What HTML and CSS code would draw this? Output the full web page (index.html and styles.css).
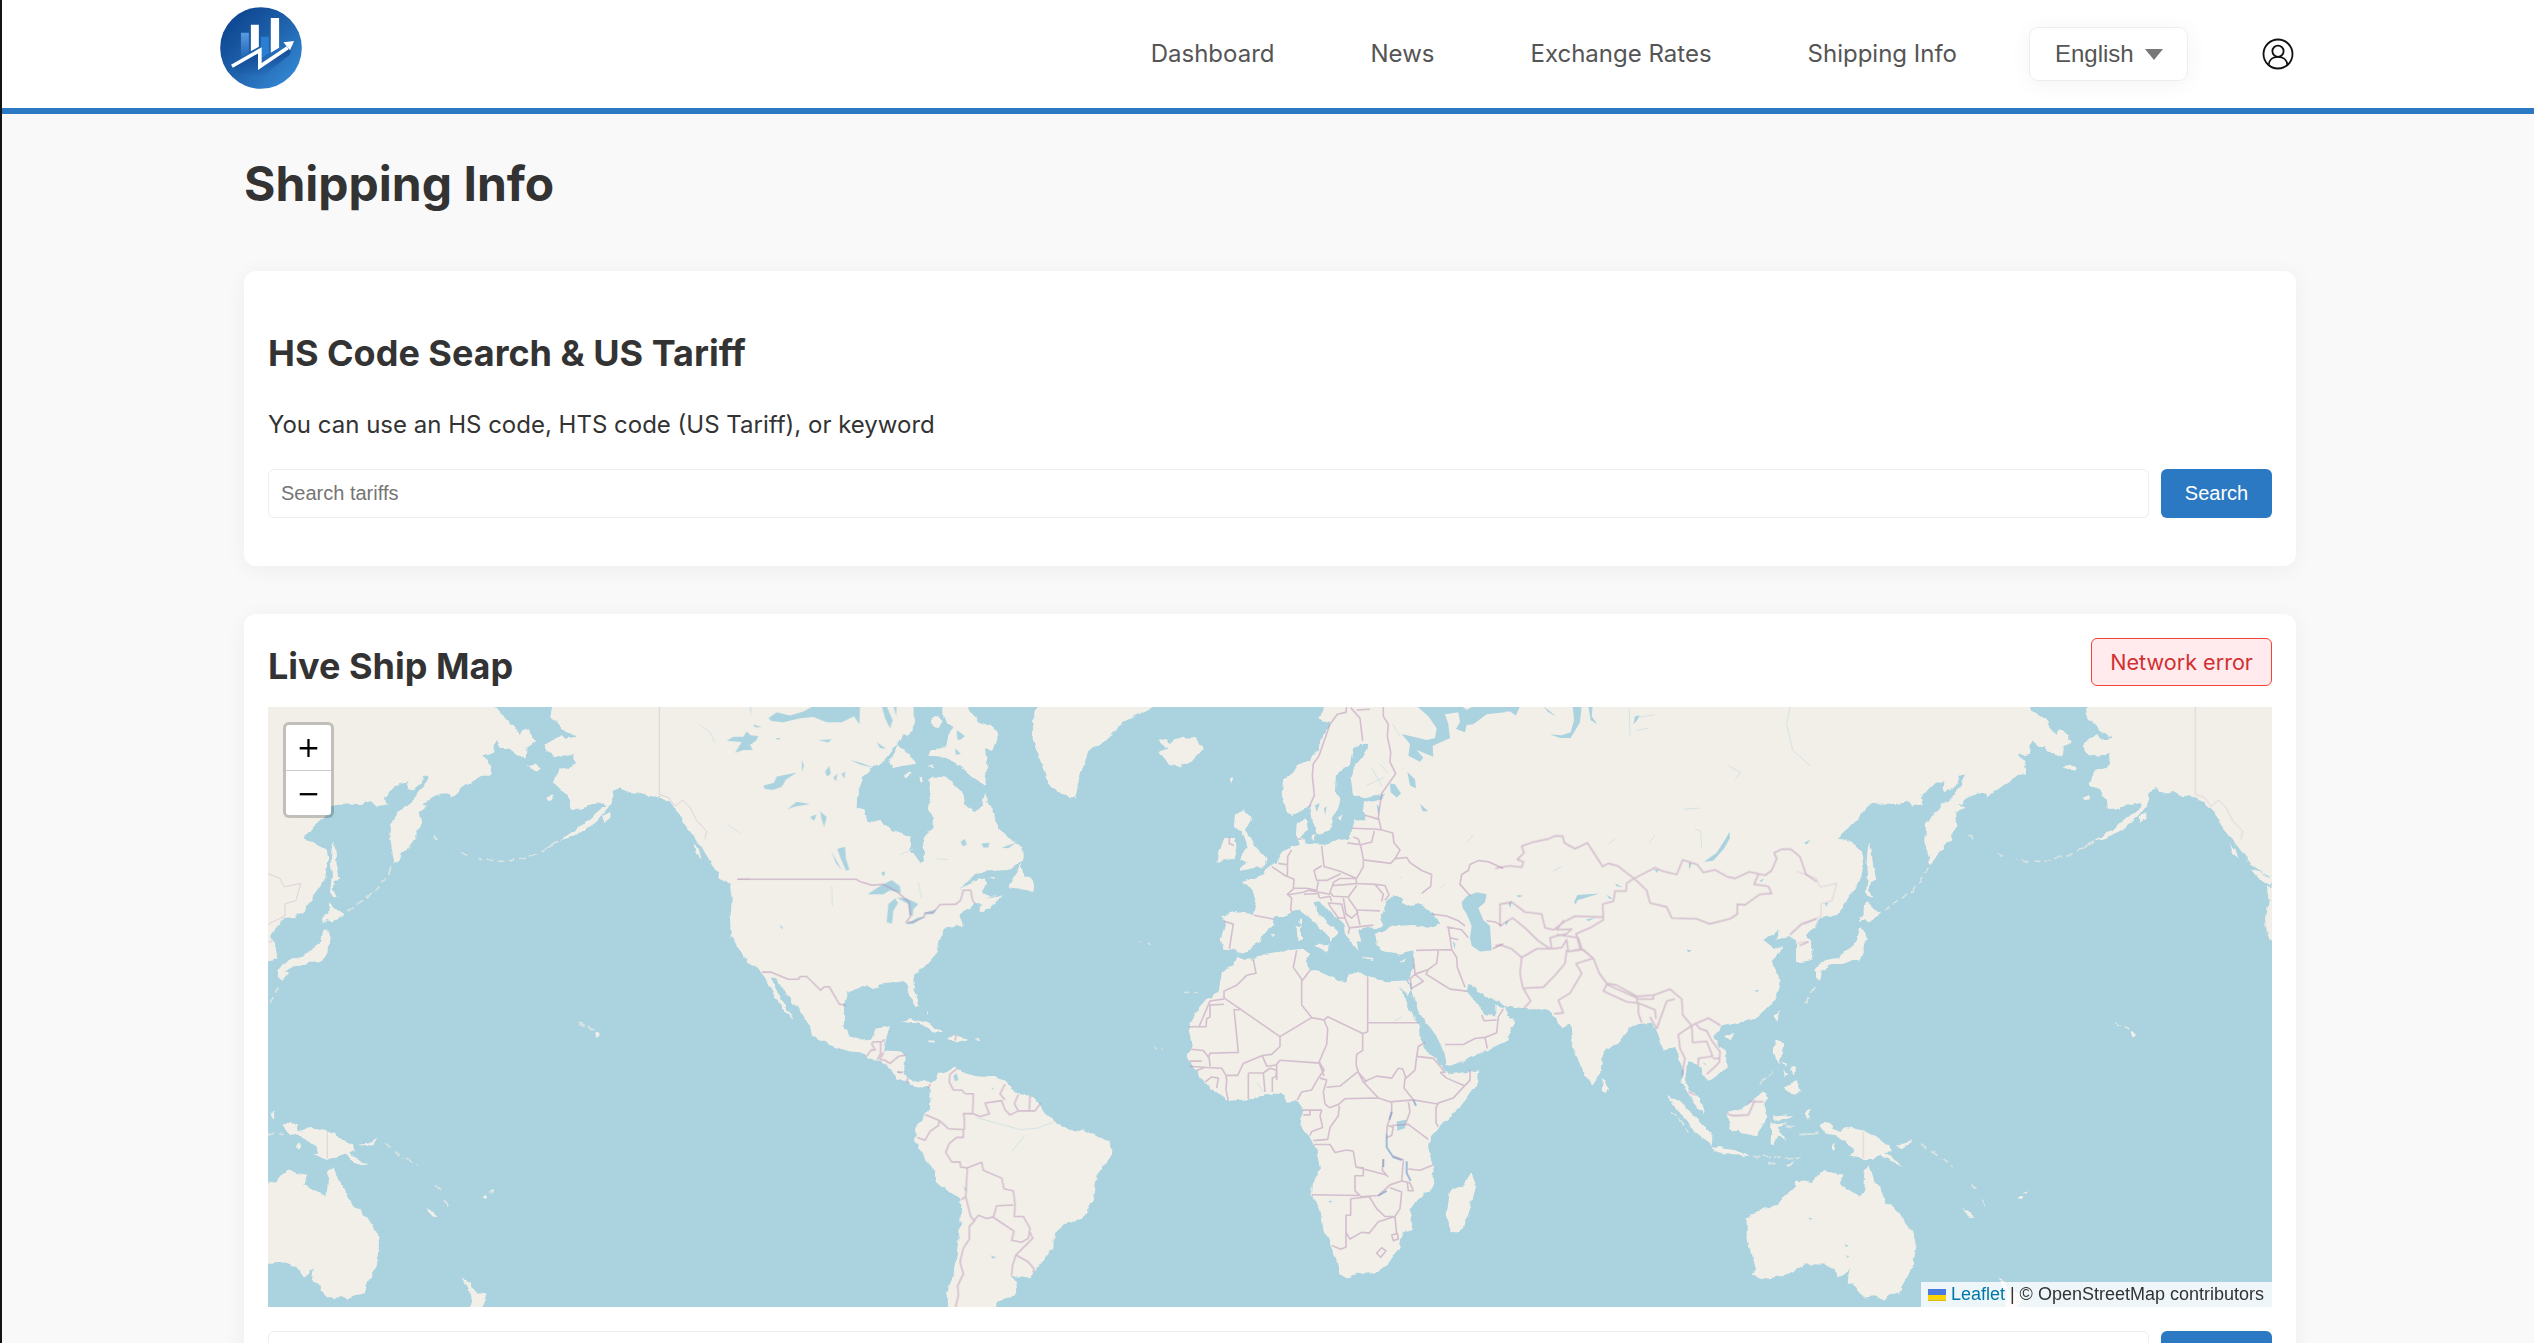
FILE: index.html
```html
<!DOCTYPE html>
<html lang="en">
<head>
<meta charset="utf-8">
<title>Shipping Info</title>
<link rel="stylesheet" href="styles.css">
</head>
<body>
<header class="site-header">
  <div class="header-inner">
    <svg class="logo" viewBox="15 22 247 246">
      <defs>
        <linearGradient id="lg" x1="0.1" y1="0.1" x2="0.9" y2="0.9"><stop offset="0" stop-color="#0c438f"/><stop offset="0.5" stop-color="#1f62ab"/><stop offset="1" stop-color="#3488d5"/></linearGradient>
        <linearGradient id="bar" x1="0" y1="0" x2="0" y2="1"><stop offset="0" stop-color="#5b9be0"/><stop offset="1" stop-color="#1e62b4"/></linearGradient>
        <linearGradient id="shade" x1="0" y1="0" x2="0" y2="1"><stop offset="0" stop-color="#0a3a85" stop-opacity=".75"/><stop offset="1" stop-color="#0a3a85" stop-opacity="0"/></linearGradient>
      </defs>
      <circle cx="138.500" cy="145" r="123" fill="url(#lg)"/>
      <path d="M52 200L130 155L134 205L232 140L225 165L140 232L70 222Z" fill="url(#shade)"/>
      <path d="M78 99h24v64l-24 14Z" fill="url(#bar)"/>
      <path d="M138 111h24v50l-22 14Z" fill="#2a7fd2"/>
      <path d="M108 75h24v66l-24 14ZM168 55h25v89l-25 15Z" fill="#fff"/>
      <path d="M51 200L135 152V201L219 144" fill="none" stroke="#fff" stroke-width="11"/>
      <path d="M206 128L238 124L226 152Z" fill="#fff"/>
    </svg>
    <nav class="nav">
      <a>Dashboard</a><a>News</a><a>Exchange Rates</a><a>Shipping Info</a>
    </nav>
    <button class="lang"><span>English</span><i class="caret"></i></button>
    <svg class="user" viewBox="0 0 32 32"><g fill="none" stroke="#111" stroke-width="1.800"><circle cx="16" cy="16" r="14.500"/><circle cx="16" cy="13.200" r="5.600"/><path d="M6.600 27c.4-5.200 4.400-8.200 9.400-8.200s9 3 9.400 8.200"/></g></svg>
  </div>
</header>
<main class="page">
  <h1>Shipping Info</h1>
  <section class="card card-search">
    <h2>HS Code Search &amp; US Tariff</h2>
    <p>You can use an HS code, HTS code (US Tariff), or keyword</p>
    <div class="search-row"><input class="field" type="text" placeholder="Search tariffs"><button class="btn">Search</button></div>
  </section>
  <section class="card card-map">
    <div class="map-head"><h2>Live Ship Map</h2><div class="alert">Network error</div></div>
    <div class="map">
      <svg class="world" viewBox="0 0 2004 600">
        <defs>
          <filter id="coast" x="0" y="0" width="2004" height="600" filterUnits="userSpaceOnUse"><feTurbulence type="fractalNoise" baseFrequency="0.11" numOctaves="2" seed="4"/><feDisplacementMap in="SourceGraphic" scale="6" xChannelSelector="R" yChannelSelector="G"/></filter>
          <g id="pacific" transform="translate(-8 -66.500) scale(.33333 .43367)">
            <path d="M0,130L680,130 712,163 745,182 763,200 778,215 790,207 812,215 828,233 800,248 797,270 770,262 745,248 725,248 710,230 704,240 703,258 665,265 683,275 692,305 688,312 665,312 635,325 605,342 575,362 566,353 545,353 520,360 505,368 487,378 503,382 480,395 484,432 470,438 468,460 445,470 440,482 425,490 420,503 403,517 397,500 388,460 390,425 410,402 440,378 470,360 495,330 507,312 490,312 485,330 468,340 450,347 443,343 445,325 420,328 400,340 375,362 380,378 350,383 335,373 300,377 265,376 230,377 215,382 200,400 175,420 145,440 128,457 150,460 170,470 200,482 205,500 198,520 192,555 160,590 130,625 105,637 75,640 65,650 45,660 30,680 45,700 52,730 40,738 0,742Z"/>
            <path d="M215,480L220,466 226,480 230,515 240,550 222,552 218,575 232,590 218,590 210,580 216,540 212,510ZM208,603L225,615 255,630 235,640 215,650 200,640 188,650 186,640 205,628ZM192,660L205,665 212,690 200,705 200,725 190,738 160,740 135,748 105,748 90,755 75,762 80,772 68,785 60,775 55,760 70,745 100,735 130,732 145,715 165,710 185,690 188,672Z"/>
            <path d="M885,130L870,178 895,190 910,208 950,222 915,226 905,218 880,228 853,242 870,258 880,265 910,268 942,262 945,285 925,295 898,298 885,315 878,330 900,340 915,350 930,368 932,388 960,388 985,382 1030,375 1040,380 1020,392 995,408 960,430 930,445 895,462 930,455 970,440 1010,418 1030,400 1050,380 1060,366 1055,350 1080,340 1100,350 1130,350 1160,358 1200,362 1230,375 1255,395 1275,425 1300,450 1320,470 1340,490 1365,515 1390,530 1420,545 1432,570 1412,562 1418,600 1410,640 1412,672 1450,720V130Z"/>
            <path d="M1362,525L1395,533 1428,553 1420,562 1385,547ZM1300,468L1315,478 1325,502 1308,492ZM1026,405L1050,396 1052,408 1032,420ZM803,290L825,286 843,296 830,302 815,296ZM862,362L880,356 882,366 868,368Z"/>
            <path d="M90,1138L68,1118 95,1108 112,1120 108,1130 130,1132 155,1122 200,1130 240,1145 275,1165 285,1180 265,1182 300,1200 325,1212 290,1205 250,1183 230,1195 205,1196 180,1190 160,1188 175,1182 165,1165 130,1150 115,1140ZM298,1162L325,1160 352,1146 342,1160 320,1168ZM495,1308L512,1314 533,1330 518,1328ZM664,1284L675,1278 682,1284 672,1290ZM682,1273L698,1267 696,1272ZM1005,905L1012,903 1020,910 1010,916ZM110,1165L118,1158 120,1168 114,1174ZM30,1090L40,1082 40,1105 32,1100Z"/>
            <path d="M0,1245L50,1250 60,1235 85,1222 110,1228 145,1232 130,1252 165,1270 195,1282 205,1265 208,1225 218,1212 232,1245 250,1255 268,1295 300,1312 325,1340 352,1362 360,1400 350,1440 325,1480 312,1505 285,1510 265,1520 235,1512 205,1515 185,1500 175,1485 155,1480 160,1450 130,1468 110,1445 80,1435 50,1433 0,1442ZM606,1466L628,1482 645,1505 680,1508 670,1525 655,1560 620,1560 634,1520 626,1495Z"/>
            <g class="isle"><path d="M895,463L870,475 845,487"/><path stroke-dasharray="7 4" d="M830,494L780,502 740,510 700,508 660,505M622,496L602,488M532,458L518,450M395,525L375,550 345,580 310,598 255,628M375,1160L395,1173M405,1178L432,1194M440,1196L470,1212M528,1254L546,1270M555,1290L566,1306M955,882L1004,898M24,1137L68,1139M55,800L30,838"/></g>
          </g>
          <g id="pacific-lines" transform="translate(-8 -66.500) scale(.33333 .43367)">
            <path class="meridian" d="M1198,130V355M202,1132V1195"/>
            <path d="M1198,355L1225,362 1245,382 1268,368 1290,385 1310,415 1340,440 1335,458M1432,550H1470M0,532L24,538 60,548 72,568 122,560 108,600 75,607 75,635 35,650 24,655M0,698L24,695 38,695"/>
          </g>
        </defs>
        <g class="land" filter="url(#coast)">
          <use href="#pacific"/><use href="#pacific" x="1536"/>
          <g transform="translate(432 -6.500) scale(.33333 .39541)">
            <path d="M-10,0L640,0 642,70 622,95 605,85 580,120 570,135 555,152 520,165 490,195 472,235 470,270 490,275 500,305 540,308 580,330 630,345 632,380 660,412 675,405 668,350 700,325 702,295 680,272 692,240 685,200 700,192 740,195 770,218 790,235 795,265 825,282 845,265 855,235 880,280 895,320 930,350 968,375 968,405 930,428 870,432 830,435 800,460 780,482 820,455 855,450 858,462 850,480 870,500 912,490 905,500 870,522 850,535 835,530 850,515 825,515 780,540 785,567 740,575 720,600 712,640 680,670 640,695 642,730 658,770 648,778 630,745 622,722 605,710 575,715 540,718 535,728 490,722 445,740 432,780 432,820 450,850 480,860 515,858 530,830 570,823 560,850 552,885 600,887 617,900 612,940 625,958 655,965 670,960 690,970 700,965 720,942 740,938 768,928 785,938 830,948 870,950 905,955 950,995 1000,1000 1040,1045 1065,1068 1110,1085 1180,1095 1230,1118 1237,1145 1190,1200 1183,1255 1150,1310 1100,1320 1062,1345 1060,1380 1015,1430 985,1462 935,1455 950,1475 955,1490 930,1512 890,1520 885,1560 742,1560 740,1500 760,1450 770,1400 780,1330 785,1260 740,1240 708,1215 700,1190 665,1140 645,1112 650,1075 690,1030 692,985 680,975 655,982 620,965 590,955 565,920 540,912 505,908 490,890 450,888 400,875 335,845 330,820 295,780 250,730 232,705 212,703 240,750 280,805 262,795 240,770 215,735 185,685 140,662 120,630 95,600 92,560 95,500 90,468 60,450 40,420 15,385 0,362 -10,355Z"/>
            <path d="M730,0L800,0 830,50 870,65 898,85 880,128 855,120 862,165 855,214 820,195 780,165 740,145 685,142 690,125 735,118 740,95 757,70 730,40ZM590,108L605,120 652,160 615,165 580,170 568,155 585,130ZM695,45L712,38 728,52 715,70 698,66ZM608,190L625,180 635,186 618,198ZM655,195L666,192 668,208 658,208ZM680,164L700,162 698,172ZM1030,0L1000,30 998,100 1020,150 1040,200 1075,235 1125,248 1140,190 1165,130 1210,105 1265,60V0ZM965,412L970,445 995,450 1005,485 985,480 925,472ZM40,418L70,430 108,455 95,462 60,445Z"/>
            <path d="M600,815L630,803 680,815 730,836 700,837 660,817 625,812ZM745,856L762,842 805,856 770,864ZM682,860L705,860 703,865 688,864ZM823,858L842,858 840,863 825,863ZM860,445L888,447 885,451ZM680,780L688,790 684,796Z"/>
          </g>
          <g transform="translate(832 -6.500) scale(.33333 .39541)">
            <path d="M685,0L655,45 690,60 665,100 640,140 600,165 550,200 545,235 560,280 580,290 610,280 630,265 640,310 655,340 690,330 700,295 722,250 705,225 708,190 750,160 760,120 780,110 805,110 800,130 760,170 752,195 758,235 790,248 840,240 855,235 845,250 790,260 785,280 800,300 780,306 762,298 752,330 750,350 720,352 665,365 620,362 605,345 620,325 615,298 590,310 588,340 600,365 575,372 550,380 530,410 500,425 490,440 455,450 425,460 455,475 470,510 462,540 400,535 365,545 375,570 362,600 370,628 400,630 415,640 450,630 478,610 485,590 520,570 525,545 560,545 595,528 620,545 660,575 690,600 685,618 700,600 718,590 680,560 650,530 640,510 660,508 690,535 730,565 735,590 760,620 775,635 770,610 790,605 775,580 800,572 825,576 850,565 840,550 860,510 880,492 910,500 905,512 930,520 955,512 1000,540 1018,565 985,578 940,568 880,570 860,578 825,590 830,615 850,635 900,640 940,632 940,670 925,710 935,735 950,780 1000,840 1030,880 1040,920 1060,920 1150,890 1220,862 1220,775 1195,780 1185,800 1150,795 1135,770 1100,735 1105,720 1125,725 1155,750 1220,758V0Z"/>
            <path d="M408,285L430,275 455,298 435,330 465,365 485,385 503,400 495,420 455,425 415,432 440,410 418,400 440,370 425,335 405,320ZM375,345L405,345 410,370 400,400 352,408 360,375ZM175,100L200,95 205,110 240,95 290,92 308,125 280,150 240,167 200,155 175,130 205,122ZM590,575L606,570 606,600 592,604ZM595,556L604,546 602,570ZM642,619L685,616 676,635ZM785,650L818,654 815,659ZM898,658L918,652 912,662ZM514,594L525,592 522,598ZM635,340L647,338 645,354ZM716,295L725,290 718,305ZM388,196L400,195 394,210ZM-10,112L30,90 70,50 150,25 165,0H-10Z"/>
            <path d="M410,645L430,655 460,655 500,640 585,630 615,628 625,640 618,660 630,680 680,692 735,715 745,690 780,688 805,700 860,710 920,708 930,735 922,748 898,722 935,790 955,820 960,855 985,890 1035,930 1045,945 1138,935 1130,970 1080,1030 1020,1075 990,1110 985,1140 1000,1180 1003,1230 960,1260 928,1285 938,1310 935,1335 905,1350 900,1380 860,1430 830,1448 780,1450 738,1462 715,1450 715,1425 690,1375 670,1340 665,1305 635,1250 640,1215 660,1185 650,1140 630,1105 598,1070 608,1030 590,1010 560,1015 545,992 510,992 460,1008 390,1012 330,980 290,940 265,905 275,870 265,825 300,770 355,740 365,690 400,670ZM1115,1192L1128,1230 1105,1300 1085,1340 1055,1345 1038,1310 1050,1240 1090,1225Z"/>
            <path class="isle" stroke-dasharray="4 5" d="M255,741L305,740M115,607L165,620M160,875L192,884"/>
          </g>
          <g transform="translate(1232 -6.500) scale(.33333 .39541)">
            <path d="M-14,0V758L10,770 70,778 135,778 165,800 185,830 210,815 220,880 250,940 275,973 300,945 310,890 350,870 400,820 455,815 470,835 492,885 525,875 540,905 552,945 540,965 560,985 580,1015 615,1048 605,1010 570,985 555,960 562,915 590,920 625,965 680,930 678,895 640,850 660,825 690,820 775,800 825,760 845,710 810,660 850,628 820,625 790,605 840,580 830,605 870,595 890,605 905,630 898,662 938,655 935,620 915,600 950,565V0ZM-14,770L5,785 48,812 25,845 -14,870Z"/>
            <path d="M308,955L330,980 320,995 305,990ZM842,780L832,815 820,800ZM673,850L703,840 690,860ZM500,1000L540,1015 600,1065 638,1100 635,1125 595,1100 550,1050ZM635,1127L700,1134 748,1152 700,1150 640,1140ZM680,1043L720,1035 760,1010 785,988 805,1005 790,1020 800,1050 770,1102 700,1090 680,1060ZM812,1120L814,1070 862,1070 832,1080 858,1118 832,1100 820,1122ZM818,1052L880,1048 860,1058 822,1060ZM830,856L850,870 845,895 838,920 818,892ZM848,978L890,960 902,990 872,996ZM845,912L858,920 855,930ZM870,925L888,930 885,950ZM850,935L868,945 855,952ZM915,1040L928,1035 922,1062ZM860,1174L908,1153 885,1162 872,1177ZM950,1220L910,1213 880,1235 850,1255 835,1275 770,1290 740,1310 740,1350 750,1390 765,1440 755,1455 790,1465 865,1450 910,1430 950,1423Z"/>
            <path class="isle" stroke-dasharray="8 3" d="M755,1153L840,1158 905,1154M805,1166L825,1170M782,970L815,938M515,1035L565,1090M895,1098L955,1096M860,1075L890,1080"/>
          </g>
        </g>
        <g class="water">
          <g transform="translate(432 -6.500) scale(.33333 .39541)">
            <path d="M205,45L230,30 270,38 310,28 340,14 480,14 478,60 462,40 425,55 380,55 340,42 300,45 250,55 215,52ZM150,16H153V40ZM545,14L560,14 578,50 570,70 555,45ZM580,14H590L588,40ZM80,102L100,92 130,92 140,78 152,88 175,90 168,102 150,112 158,125 130,125 105,132 125,105ZM190,215L222,208 230,192 290,182 258,200 245,218 220,226 195,224ZM262,275L290,256 330,262 285,268ZM412,375L435,370 438,400 448,428 438,430 420,395ZM393,380L425,428 408,412ZM545,433L555,433 553,443 546,442ZM237,568L248,572 248,579ZM360,280L380,295 372,320 365,300ZM375,180L388,165 392,185 382,192ZM782,357L795,350 800,365 788,368ZM845,362L868,360 865,372 850,372ZM400,195L412,185 408,205ZM425,185L436,180 432,198ZM330,295L350,288 342,305ZM225,95L242,95 235,100ZM160,60L185,68 165,68ZM355,100L395,98 385,106ZM305,150L312,165 306,180ZM450,150L485,158 522,170 480,162ZM770,75L795,90 780,100 772,98ZM765,120L782,135 768,138ZM530,105L558,122 540,120ZM905,372L948,360 925,374Z"/>
            <path d="M502,490L545,467 575,454 600,470 602,487 570,480 550,490ZM565,515L585,500 594,512 580,532 576,565 560,560ZM590,498L620,500 655,515 640,528 638,545 628,542 625,515ZM618,566L650,550 675,545 640,565ZM675,537L708,528 700,540 675,541ZM760,950L770,942 775,960 765,963ZM788,1228L802,1238 795,1238ZM872,1403L888,1408 878,1412ZM875,978L882,982 876,984ZM592,935L605,944 595,942Z"/>
            <path class="creek" d="M0,62L30,80 45,108M85,315L120,335M600,390L640,375M710,400L742,402M655,460L665,500M860,500L890,492M830,1055L960,1085 1010,1082 1060,1066M935,1140L975,1100M395,470L397,520"/>
          </g>
          <g transform="translate(832 -6.500) scale(.33333 .39541)">
            <path d="M950,14L985,40 1010,70 1005,95 980,100 930,90 905,85 930,110 925,140 960,155 970,145 950,125 1000,142 998,115 1050,95 1045,60 1035,35 1075,30 1080,55 1068,72 1095,80 1100,62 1120,60 1160,35 1215,30V14H1120L1100,24 1085,14ZM1085,510L1100,495 1130,485 1160,490 1155,510 1135,525 1150,555 1170,570 1175,632 1140,635 1115,620 1110,600 1115,570 1100,540 1088,525ZM870,210L885,212 903,235 890,245 872,232ZM922,180L945,200 948,222 930,215ZM645,265L660,260 650,282ZM672,272L680,268 675,290ZM830,262L838,270 835,292ZM960,262L985,280 968,280ZM890,1065L918,1060 915,1082 892,1088ZM685,1265L698,1266 690,1270ZM1058,608L1066,615 1064,630ZM775,582L815,578 822,600 800,600 812,625 785,612ZM900,722L925,750 920,752Z"/>
            <path class="creek" d="M800,215L850,195M840,160L865,185M878,60L900,90M815,170L845,215M1100,360L1120,340M1020,475L1038,462M885,810L905,800M470,965L490,990M898,450L905,446"/>
            <path class="lake-line" d="M860,1095V1130L880,1155 905,1162M920,1165V1195L932,1215M940,1010L948,1025M850,1160V1180M835,1252L860,1240M875,1040L868,1060"/>
          </g>
          <g transform="translate(1232 -6.500) scale(.33333 .39541)">
            <path d="M-14,14H60L48,38 30,28 -14,28ZM130,14L168,40 145,30ZM150,86L185,88 212,80 222,50 218,14H245L240,55 212,95 180,95ZM265,14H278L275,40 292,60 272,50ZM400,60L405,40 420,38 410,52ZM612,408L650,385 680,345 688,332 690,348 672,375 640,405ZM222,510L232,492 298,488 260,498 232,505 228,515ZM258,553L285,550 265,558ZM345,462L368,472 350,470ZM320,492L338,500 328,502ZM462,428L475,428 472,436ZM566,410L575,412 568,428ZM780,455L792,450 784,460ZM975,512L985,512 978,522ZM560,630L575,632 565,637ZM25,515L35,505 32,525ZM50,492L70,494 55,498ZM912,360L932,352 920,364ZM15,560L25,556 20,570ZM925,1308L938,1310 930,1314ZM610,915L620,922 612,920ZM765,732L778,733 770,738Z"/>
            <path class="creek" d="M870,16L860,60 878,125 930,165M685,165L722,182 705,200M552,275L598,272M585,325L602,330 605,375M388,20L390,88M410,75L445,70M420,42L465,36M448,360L465,340M325,362L347,350M185,420L160,432"/>
            <path d="M1032,1375L1046,1378 1040,1382ZM1038,1403L1048,1406 1042,1409Z"/>
          </g>
        </g>
        <g class="borders">
          <use href="#pacific-lines"/><use href="#pacific-lines" x="1536"/>
          <g transform="translate(432 -6.500) scale(.33333 .39541)">
            <path d="M112,452H468L480,458 515,467 550,465 590,483 627,510 632,545 618,562 640,560 672,548 675,537 700,536 720,516 768,515 782,505 790,480 812,480 818,505 825,515M185,687H212L265,705H295L300,698 320,698 362,733 372,724 388,724 418,768 438,771M500,900L512,885 525,883 515,868 520,863H545L555,857M542,863V893L532,908M617,897L595,900 570,918 555,910 540,908 550,890M592,940H610M622,955V968M690,970L685,980M768,845L766,860M770,932L750,945 748,965 760,985 785,985 795,994 820,995 818,1045M820,1045L790,1045 793,1055 793,1085M675,1047L718,1062 745,1083 790,1085 790,1105 770,1105 748,1120 737,1143 755,1167 780,1167 782,1180 802,1182M718,1062L715,1075 690,1090 675,1112 652,1105M820,1045L840,1052 868,1045 855,1018 905,1012 915,1035 930,1048 955,1038 990,1038 1005,1038 1022,1018M915,970L900,995 915,1010M955,996L943,1020 955,1038M990,1000L988,1035M802,1182L845,1168 850,1188 905,1208 912,1235 940,1240 945,1275 943,1305 970,1305 990,1335 985,1360 965,1370 935,1365 942,1342 880,1307 890,1278 940,1276M802,1182L797,1255 785,1262M797,1255L812,1305 822,1315 835,1302 860,1310 880,1306M825,1315L808,1330 808,1362 790,1385 780,1420 790,1450 773,1480 775,1505 765,1540M990,1345L998,1360 948,1402 937,1430 935,1453M948,1402L985,1420 1002,1437 1000,1447"/>
          </g>
          <g transform="translate(832 -6.500) scale(.33333 .39541)">
            <path d="M740,14L738,30 712,35 690,60 657,140 640,160 637,190 643,240 627,270M752,18L780,45 788,102M850,14V40L865,60 862,90 872,130 870,155 887,185 845,235 840,265 835,295 843,325M770,24L810,22M795,290L835,300M755,323L820,325 843,327 878,335 882,360 900,378 885,400 872,412 790,403 782,365 742,360M823,330L815,358 782,365M760,345L775,350 780,362M665,368L672,420 720,432 770,450 790,420 790,405M665,418L642,430 650,455 680,455 722,438M700,460L720,450 768,450 770,463 745,465 700,468ZM885,400L920,397 930,410 965,430 995,440 992,470 965,488M770,463L825,465 850,490 845,508M825,465L855,468 867,492 855,505M770,468L745,497 700,495 690,485 700,463M745,500L770,530 840,532M575,378L563,395 562,445 582,452 580,475 620,475 650,480 655,458M515,420L560,445M535,412L560,415M582,475L562,490 575,500 572,530 578,535M562,492L610,485 625,480 690,490M462,543L522,553M370,558L400,565 388,628M612,490L655,488 658,500M685,512L725,515 735,550 715,550 690,520ZM730,500L738,540 755,550 775,535M735,550L748,575 745,590M748,575L820,568M770,530L780,568M660,500L690,495 695,508M388,346V362L402,366M595,350H605M995,540L1040,545 1075,557 1095,570M1040,572L1085,580 1105,600M1045,575L1050,600 1075,605M1055,628L1050,600M948,632L1055,630 1070,650 1072,675 1095,725M1015,632L1010,665 985,680 945,692 930,705M985,680L978,692 1050,730 1100,735M930,700L935,728 970,710 945,692M940,650L945,690M1085,440L1080,465 1112,495M1085,440L1105,430 1110,415 1135,405 1165,408 1210,425M1160,557L1185,560 1205,570M1178,628L1210,615"/>
            <path d="M590,632L580,675 605,705 605,770 635,802 540,850 372,752 372,735 410,720 440,695 468,690 460,655M630,682L607,708M635,802L672,808 683,800 788,842 803,838 803,700M805,815H955M788,842L788,885 770,895 768,920 775,940 800,965M672,808L683,830 680,870 657,915 672,950M540,850L540,875 515,895 487,898 430,918 413,948 380,948M265,825H318L320,805 330,800 330,770 372,768M297,825L330,760 372,755M402,780L415,890 330,892 325,905M402,782H420M272,882L310,885 328,905 330,925M268,912H305M268,925L320,928 365,930 378,948 380,960 378,985 385,1012M290,935L310,930M315,965L335,952 355,955 350,980M445,942L445,1008M445,942H490L495,990M490,942L510,930 530,935 528,950 517,955V990M487,898L500,925 530,922M530,960L530,920 540,910 660,917 672,935 655,955 635,985 605,990 592,1010M660,955L680,960 670,990 675,1020 688,1030M680,978L720,975 772,940M775,940L790,965 835,1005M790,965L830,950 875,955 895,930 908,932 918,955 945,935 950,900 1000,905 1035,940 1020,940M950,900L955,875 975,865M915,955L912,980 940,1010 870,1015 835,1005 735,1007 715,1022 688,1030M718,1025L715,1050 690,1080 683,1110 640,1113M608,1036L665,1036 660,1050 668,1080 635,1090 630,1100M610,1048H630V1036M642,1123H690L705,1143 740,1137 760,1140 768,1180 790,1182V1202L765,1202V1240L780,1252 635,1250M768,1180L860,1200M850,1160L847,1188 865,1205M910,1165L905,1215 870,1225M905,1215L930,1220 940,1240 925,1240 922,1220M875,1015L875,1045 862,1075 860,1095M875,1075L925,1072 985,1110M925,1015L930,1040 915,1075M940,1010L1008,1020 1015,1018 1060,1005 1110,960V935M1020,940L1040,955 1095,975M1015,1018L1008,1030V1068L1015,1078M865,1075L880,1080 875,1100 860,1105M880,1152L912,1163M925,1185L960,1188 1000,1175M870,1225L835,1252 780,1255M870,1232L905,1243 900,1285 885,1305 855,1305 830,1285 808,1255M752,1260L808,1255M752,1260V1302H738V1382L722,1388 695,1378M738,1345L750,1362 785,1345 808,1347 835,1318 885,1305 890,1350M875,1352L892,1348 895,1362 880,1366ZM830,1398L845,1384 858,1392 842,1408ZM1035,870L1090,870 1125,855 1155,852 1162,880M1155,852L1190,840 1195,800 1210,780M1145,795L1152,810 1190,808"/>
          </g>
          <g transform="translate(1232 -6.500) scale(.33333 .39541)">
            <path d="M-14,425L0,422 30,418 65,422 70,408 52,402 72,385 65,368 100,358 145,350 165,342 188,343 193,360 225,375 262,360 308,420 325,412 352,418 402,450 465,423 490,432 530,440 548,403 592,415 610,435 645,428 680,445 705,450 748,433 795,442 815,430 830,400 822,385 845,376 872,376 900,395 918,440 950,458M402,450L440,480 450,512 500,522 515,550 590,552 628,565 690,552 712,540 712,515 735,517 780,490 815,488 805,470 762,465 775,440M402,450L380,462 378,482 345,482 340,508 308,515 310,555 270,575 228,590 240,625 280,652 298,690 320,715 350,720 410,748 462,745 510,730 545,755 548,795 575,822 625,803 662,822M310,548L225,545 192,560 160,580 135,575 125,540 75,535 35,510 0,515V570L38,550 75,575 115,608 150,628M192,555L170,580 215,578 200,590 170,595 150,600 155,628M-14,620L0,618 35,628 65,650 60,690 68,725 92,760 72,778M65,650L110,628 155,628 185,625 200,605 205,635 245,628 235,600 170,592M200,630L195,665 165,695 130,725 68,728M205,635L250,630 280,652 228,665 245,690 210,740 175,758 190,790 162,792M310,735L320,718 410,752 412,765 380,762ZM412,755H460V745L420,748M415,765L465,782 468,805M415,765V790L425,815M450,800L470,830 500,760 525,755M575,822L535,845 540,880 555,905 545,950M575,822L578,865 620,862 638,900 595,905V925M585,815L600,830 620,835 635,860 660,888 658,915 640,930 620,945M638,905H658M565,990L588,998M680,1045L700,1050 745,1048 765,1010M745,1015L790,1015M870,592L905,565 950,552M898,620L925,610"/>
          </g>
        </g>
      </svg>
      <div class="zoom"><span>+</span><span>&#8722;</span></div>
      <div class="attribution"><svg class="flag" viewBox="0 0 12 8"><path fill="#4c7be1" d="M0 0h12v4H0z"/><path fill="#ffd500" d="M0 4h12v3H0z"/><path fill="#e0bc00" d="M0 7h12v1H0z"/></svg><a>Leaflet</a><span>| © OpenStreetMap contributors</span></div>
    </div>
    <div class="search-row"><input class="field" type="text"><button class="btn"></button></div>
  </section>
</main>
</body>
</html>
```
FILE: styles.css
```css
* { box-sizing: border-box; }
html { height: 100%; overflow: hidden; }
body {
  margin: 0;
  height: 1343px;
  overflow: hidden;
  border-left: 2px solid #141414;
  background: #f9f9f9;
  color: #333;
  font: 24px/30px Inter, "Liberation Sans", sans-serif;
}
h1, h2, p { margin: 0; }
h2 { font-size: 36px; line-height: 44px; font-weight: 700; }

.site-header { height: 114px; background: #fff; border-bottom: 6px solid #2b79c3; }
.header-inner { display: flex; align-items: center; height: 108px; width: 2074px; margin-left: 218px; }
.logo { width: 82px; height: 82px; align-self: flex-start; margin-top: 7px; margin-right: auto; }
.nav { display: flex; gap: 96px; color: #555; }
.lang {
  display: flex; align-items: center; justify-content: space-between;
  width: 159px; height: 54px; margin: 0 74px 0 72px; padding: 0 24px 0 25px;
  background: #fff; border: 1px solid #eee; border-radius: 9px;
  box-shadow: 0 3px 22px rgba(0, 0, 0, .05);
  color: #555; font: 24px "Liberation Sans", Arial, sans-serif;
}
.caret { border: 9px solid transparent; border-top: 11px solid #777; border-bottom: 0; }
.user { width: 32px; height: 32px; }

.page { width: 2052px; margin-left: 242px; padding-top: 40px; }
h1 { height: 117px; font-size: 48px; line-height: 59px; font-weight: 700; }
.card {
  padding: 24px; background: #fff; border-radius: 12px;
  box-shadow: 0 3px 22px rgba(0, 0, 0, .05);
}
.card-search { height: 295px; margin-bottom: 48px; padding-top: 60px; }
.card-search p { margin: 35px 0 29px; }
.card-map { height: 800px; }
.search-row { display: flex; gap: 12px; }
.field {
  flex: 1; height: 49px; padding: 0 12px; border: 1px solid #eee; border-radius: 6px;
  background: #fff; font: 20px "Liberation Sans", Arial, sans-serif;
}
.field::placeholder { color: #757575; }
.btn {
  width: 111px; height: 49px; padding: 0; border: 0; border-radius: 6px;
  background: #2b79c3; color: #fff; font: 20px "Liberation Sans", Arial, sans-serif;
}
.map-head { display: flex; justify-content: space-between; align-items: flex-start; height: 69px; }
.map-head h2 { margin-top: 6px; }
.alert {
  height: 48px; padding: 0 18px; border: 1px solid #f44336; border-radius: 6px;
  background: #ffebee; color: #d32f2f; font-size: 21.6px; line-height: 47px;
}

.map { position: relative; height: 600px; margin-bottom: 24px; overflow: hidden; background: #aad3df; }
.world { display: block; width: 2004px; height: 600px; }
.land { fill: #f2efe9; }
.isle { fill: none; stroke: #dbe4e2; stroke-width: 1.6; }
.isle path, path.isle { vector-effect: non-scaling-stroke; }
.water { fill: #aad3df; }
.creek, .lake-line { fill: none; stroke: #d3e2e3; stroke-width: 1; vector-effect: non-scaling-stroke; }
.lake-line { stroke: #9dbcd6; stroke-width: 2; }
.borders { fill: none; stroke: #b58fb3; stroke-opacity: .5; stroke-width: 1.6; stroke-linejoin: round; }
.borders path { vector-effect: non-scaling-stroke; }
.borders .meridian { stroke-width: 2.5; stroke-opacity: .35; }
.zoom {
  position: absolute; left: 15px; top: 15px; width: 51px; height: 96px;
  border: 3px solid rgba(0, 0, 0, .2); border-radius: 6px; background: #fff; background-clip: padding-box;
}
.zoom span {
  display: block; height: 45px; text-align: center; color: #000;
  font: 28px/46px "DejaVu Sans", sans-serif;
}
.zoom span + span { border-top: 1px solid #ccc; }
.attribution {
  position: absolute; right: 0; bottom: 0; display: flex; align-items: center; gap: 5px;
  height: 25px; padding: 0 8px 0 7px; background: rgba(255, 255, 255, .8);
  color: #333; font: 18px/25px "Liberation Sans", Arial, sans-serif;
}
.attribution a { color: #0078a8; }
.flag { width: 18px; height: 12px; }
```
